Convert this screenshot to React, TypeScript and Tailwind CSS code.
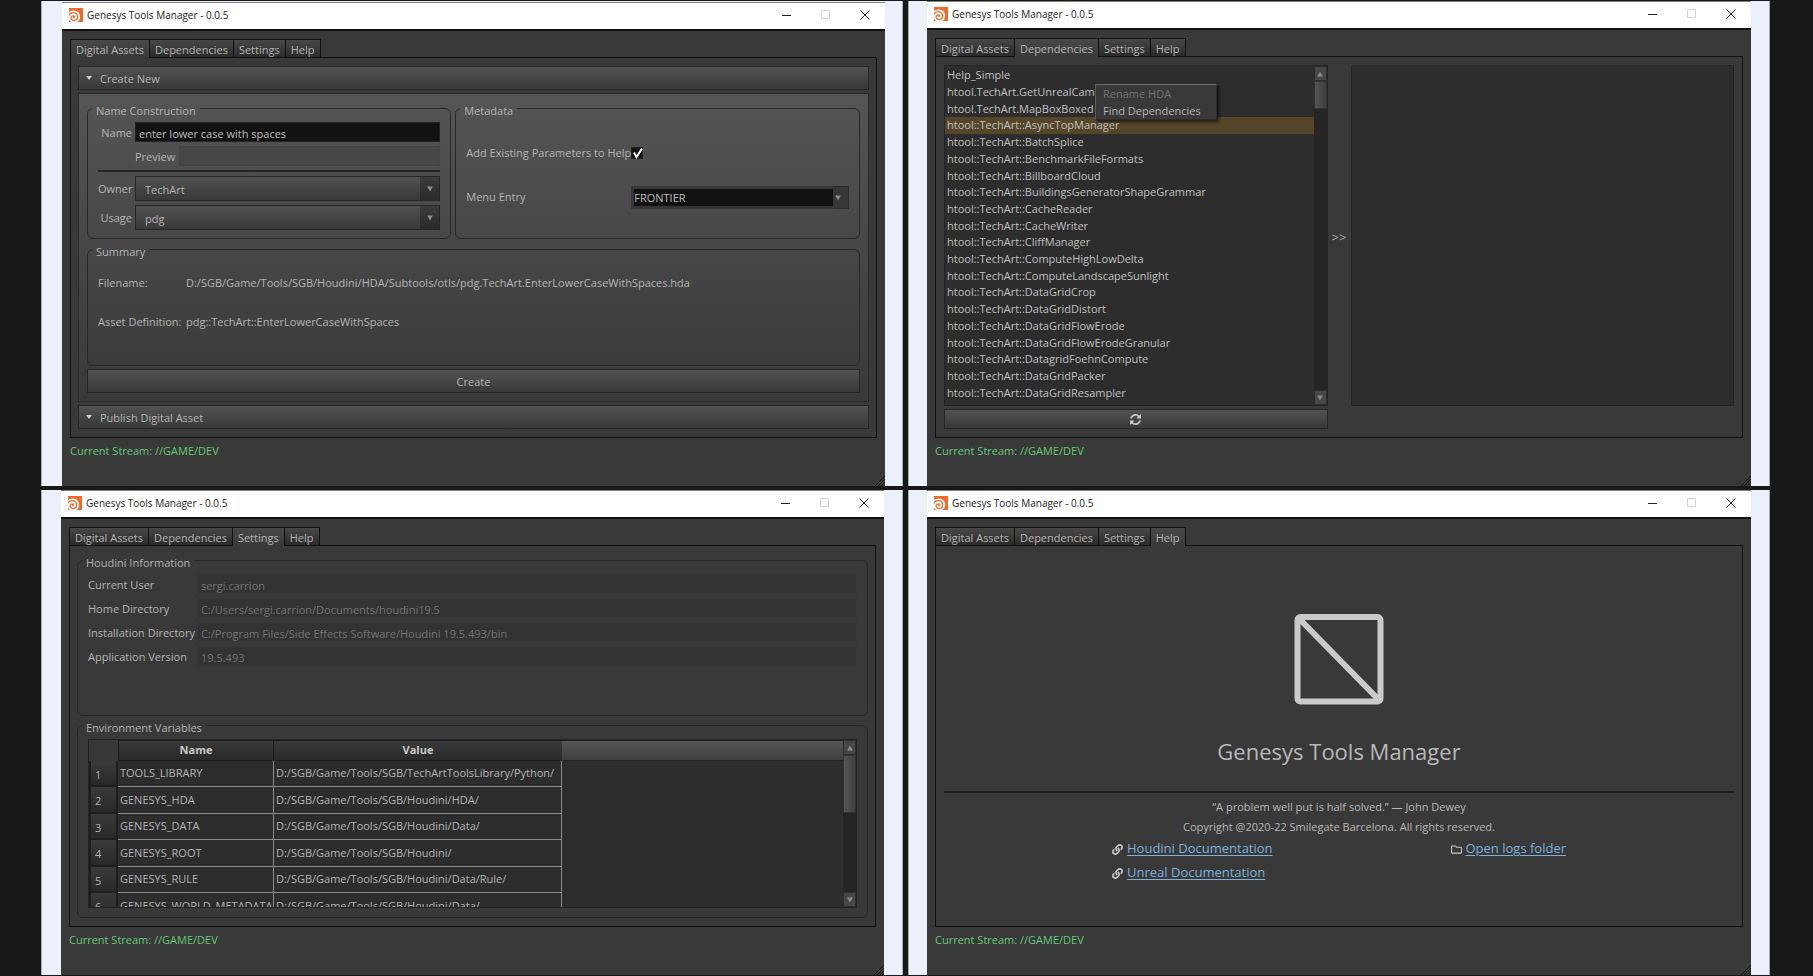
import { useId, useState, type ReactNode } from "react";
import clsx from "clsx";
import { FaLink, FaRegFolder } from "react-icons/fa";
import { SiHoudini } from "react-icons/si";

const TABS = ["Digital Assets", "Dependencies", "Settings", "Help"] as const;
type Tab = (typeof TABS)[number];

const ASSETS = [
  "Help_Simple",
  "htool.TechArt.GetUnrealCam",
  "htool.TechArt.MapBoxBoxed",
  "htool::TechArt::AsyncTopManager",
  "htool::TechArt::BatchSplice",
  "htool::TechArt::BenchmarkFileFormats",
  "htool::TechArt::BillboardCloud",
  "htool::TechArt::BuildingsGeneratorShapeGrammar",
  "htool::TechArt::CacheReader",
  "htool::TechArt::CacheWriter",
  "htool::TechArt::CliffManager",
  "htool::TechArt::ComputeHighLowDelta",
  "htool::TechArt::ComputeLandscapeSunlight",
  "htool::TechArt::DataGridCrop",
  "htool::TechArt::DataGridDistort",
  "htool::TechArt::DataGridFlowErode",
  "htool::TechArt::DataGridFlowErodeGranular",
  "htool::TechArt::DatagridFoehnCompute",
  "htool::TechArt::DataGridPacker",
  "htool::TechArt::DataGridResampler",
];

const HOUDINI_INFO = [
  ["Current User", "sergi.carrion"],
  ["Home Directory", "C:/Users/sergi.carrion/Documents/houdini19.5"],
  ["Installation Directory", "C:/Program Files/Side Effects Software/Houdini 19.5.493/bin"],
  ["Application Version", "19.5.493"],
];

const ENV_VARS = [
  ["TOOLS_LIBRARY", "D:/SGB/Game/Tools/SGB/TechArtToolsLibrary/Python/"],
  ["GENESYS_HDA", "D:/SGB/Game/Tools/SGB/Houdini/HDA/"],
  ["GENESYS_DATA", "D:/SGB/Game/Tools/SGB/Houdini/Data/"],
  ["GENESYS_ROOT", "D:/SGB/Game/Tools/SGB/Houdini/"],
  ["GENESYS_RULE", "D:/SGB/Game/Tools/SGB/Houdini/Data/Rule/"],
  ["GENESYS_WORLD_METADATA", "D:/SGB/Game/Tools/SGB/Houdini/Data/"],
];

const raised = "border border-[#262626] bg-linear-to-b from-[#525252] to-[#393939]";

function Triangle({ up = false }: { up?: boolean }) {
  return (
    <svg viewBox="0 0 6 6" className="size-1.5 fill-[#8e8e8e]" aria-hidden="true">
      <path d={up ? "M3 0.5 5.8 5.5H0.2z" : "M3 5.5 5.8 0.5H0.2z"} />
    </svg>
  );
}

function Group({ title, className, children }: { title: string; className?: string; children: ReactNode }) {
  return (
    <fieldset className={clsx("min-w-0 rounded-md border border-[#282828]", className)}>
      <legend className="ml-1 h-[18px] px-1 pt-1.5 leading-3">{title}</legend>
      {children}
    </fieldset>
  );
}

function ScrollBar({ thumb }: { thumb: string }) {
  return (
    <div className="flex w-[13px] shrink-0 flex-col bg-[#252525]">
      <button
        aria-label="Scroll up"
        className="flex h-[15px] items-center justify-center border border-[#2e2e2e] bg-[#474747]"
      >
        <Triangle up />
      </button>
      <div className={clsx("border border-[#333] bg-linear-to-r from-[#565656] to-[#3e3e3e]", thumb)} />
      <button
        aria-label="Scroll down"
        className="mt-auto flex h-[15px] items-center justify-center border border-[#2e2e2e] bg-[#474747]"
      >
        <Triangle />
      </button>
    </div>
  );
}

function Combo({ id, value }: { id: string; value: string }) {
  return (
    <div className="relative h-[25px]">
      <select id={id} className={clsx(raised, "size-full appearance-none pt-0.5 pl-[9px] leading-4 text-[#b4b4b4]")}>
        <option>{value}</option>
      </select>
      <span className="pointer-events-none absolute inset-y-px right-px flex w-[19px] items-center justify-center bg-linear-to-b from-[#3c3c3c] to-[#2a2a2a]">
        <Triangle />
      </span>
    </div>
  );
}

function SectionButton({ children }: { children: ReactNode }) {
  return (
    <button className={clsx(raised, "flex h-6 w-full shrink-0 items-center gap-[7px] pt-0.5 pl-1.5 text-left")}>
      <svg viewBox="0 0 8 8" className="size-2 fill-[#d0d0d0]" aria-hidden="true">
        <path d="M1 1h6L4 5z" />
      </svg>
      {children}
    </button>
  );
}

function DigitalAssets() {
  const id = useId();
  return (
    <div className="flex flex-1 flex-col gap-[3px] px-[7px] py-2">
      <SectionButton>Create New</SectionButton>
      <section className="flex flex-1 flex-col border border-[#2b2b2b] bg-linear-to-b from-[#555] to-[#393939] px-2 pt-[5px] pb-2">
        <div className="grid grid-cols-[9fr_10fr] gap-x-1">
          <Group title="Name Construction">
            <div className="grid grid-cols-[34px_1fr] items-center gap-x-[3px] gap-y-1 px-2.5 pt-[5px] pb-2">
              <label htmlFor={`${id}-name`} className="pt-0.5 text-right">Name</label>
              <input
                id={`${id}-name`}
                defaultValue="enter lower case with spaces"
                className="h-5 min-w-0 border border-[#222] bg-[#121212] px-[3px] pt-0.5 text-[#bdbdbd] outline-none"
              />
              <div className="col-start-2 flex items-center gap-1">
                <label htmlFor={`${id}-preview`} className="pt-0.5">Preview</label>
                <input id={`${id}-preview`} readOnly className="h-5 min-w-0 flex-1 border border-[#434343] bg-[#474747]" />
              </div>
              <hr className="col-span-2 h-0.5 border-0 bg-[#262626]" />
              <label htmlFor={`${id}-owner`} className="pt-0.5 text-right">Owner</label>
              <Combo id={`${id}-owner`} value="TechArt" />
              <label htmlFor={`${id}-usage`} className="pt-0.5 text-right">Usage</label>
              <Combo id={`${id}-usage`} value="pdg" />
            </div>
          </Group>

          <Group title="Metadata">
            <div className="grid grid-cols-[161px_1fr] items-center gap-x-1 gap-y-6 px-2.5 pt-[27px]">
              <label htmlFor={`${id}-params`} className="whitespace-nowrap">Add Existing Parameters to Help</label>
              <span className="relative size-[18px]">
                <input
                  id={`${id}-params`}
                  type="checkbox"
                  defaultChecked
                  className="peer mt-[3px] block size-3 appearance-none border border-[#222] bg-[#141414]"
                />
                <svg
                  viewBox="0 0 14 14"
                  className="pointer-events-none absolute top-0.5 left-0 hidden size-3.5 fill-none stroke-white stroke-2 peer-checked:block"
                >
                  <path d="M3 6.5 5.5 11 11 2.5" />
                </svg>
              </span>
              <label htmlFor={`${id}-menu`}>Menu Entry</label>
              <div className="relative h-[23px]">
                <select
                  id={`${id}-menu`}
                  className="size-full appearance-none border-[3px] border-[#363636] bg-[#121212] leading-4 text-[#bdbdbd]"
                >
                  <option>FRONTIER</option>
                </select>
                <span className="pointer-events-none absolute inset-y-0 right-0 flex w-4 items-center border border-l-0 border-[#2c2c2c] bg-[#373737] pl-0.5">
                  <Triangle />
                </span>
              </div>
            </div>
          </Group>
        </div>

        <Group title="Summary" className="mt-px flex-1">
          <dl className="grid grid-cols-[84px_1fr] gap-x-1 gap-y-[23px] px-2.5 pt-[17px] leading-4">
            <dt>Filename:</dt>
            <dd>D:/SGB/Game/Tools/SGB/Houdini/HDA/Subtools/otls/pdg.TechArt.EnterLowerCaseWithSpaces.hda</dd>
            <dt className="whitespace-nowrap">Asset Definition:</dt>
            <dd>pdg::TechArt::EnterLowerCaseWithSpaces</dd>
          </dl>
        </Group>
        <button className={clsx(raised, "mt-[3px] h-6 shrink-0 pt-0.5")}>Create</button>
      </section>
      <SectionButton>Publish Digital Asset</SectionButton>
    </div>
  );
}

function Dependencies() {
  const [selected, setSelected] = useState(3);
  return (
    <div className="grid flex-1 grid-cols-[1fr_23px_1fr] grid-rows-[1fr_20px] gap-y-[3px] p-2">
      <div className="relative flex border border-[#252525] bg-[#2d2d2d]">
        <ul className="flex flex-1 flex-col pt-px pb-1">
          {ASSETS.map((asset, i) => (
            <li key={asset} className="flex min-h-4 flex-1">
              <button
                onClick={() => setSelected(i)}
                className={clsx("flex flex-1 items-center pl-0.5 leading-4 text-[#c0c0c0]", i === selected && "bg-[#55462a]")}
              >
                {asset}
              </button>
            </li>
          ))}
        </ul>
        <ScrollBar thumb="h-7" />

        {/* Context menu */}
        <div
          role="menu"
          className="absolute top-[18px] left-[150px] flex w-[122px] flex-col border border-t-[#6e6e6e] border-r-[#2c2c2c] border-b-[#2c2c2c] border-l-[#5c5c5c] bg-[#393939] shadow-[2px_2px_3px_rgba(0,0,0,0.6)]"
        >
          <button role="menuitem" disabled className="h-[17px] pt-px pl-[7px] text-left text-[#747474]">
            Rename HDA
          </button>
          <button role="menuitem" className="h-[17px] pt-px pl-[7px] text-left">
            Find Dependencies
          </button>
        </div>
      </div>
      <button className="pt-1 text-[13px] text-[#a8a8a8]">&gt;&gt;</button>
      <div className="border border-[#252525] bg-[#2d2d2d]" />
      <button aria-label="Refresh" className={clsx(raised, "flex items-center justify-center")}>
        <svg viewBox="0 0 1536 1536" className="size-[11px] fill-[#c8c8c8]">
          <path d="M1511 928q0 5-1 7-64 268-268 434.5t-478 166.5q-146 0-282.5-55t-243.5-157l-129 129q-19 19-45 19t-45-19-19-45v-448q0-26 19-45t45-19h448q26 0 45 19t19 45-19 45l-137 137q71 66 161 102t187 36q134 0 250-65t186-179q11-17 53-117 8-23 30-23h192q13 0 22.5 9.5t9.5 22.5zm25-800v448q0 26-19 45t-45 19h-448q-26 0-45-19t-19-45 19-45l138-138q-148-137-349-137-134 0-250 65t-186 179q-11 17-53 117-8 23-30 23h-199q-13 0-22.5-9.5t-9.5-22.5v-7q65-268 270-434.5t480-166.5q146 0 284 55.5t245 156.5l130-129q19-19 45-19t45 19 19 45z" />
        </svg>
      </button>
    </div>
  );
}

function Settings() {
  const id = useId();
  return (
    <div className="flex flex-1 flex-col px-[7px] pt-[5px] pb-2">
      <Group title="Houdini Information" className="h-[165px] shrink-0">
        <div className="grid grid-cols-[auto_1fr] items-center gap-x-0.5 gap-y-1 px-2.5 pt-[5px]">
          {HOUDINI_INFO.map(([label, value]) => (
            <div key={label} className="contents">
              <label htmlFor={`${id}-${label}`} className="pt-0.5">{label}</label>
              <input
                id={`${id}-${label}`}
                disabled
                value={value}
                className="h-5 min-w-0 border border-[#363636] bg-[#333] px-[3px] pt-0.5 text-[#747474]"
              />
            </div>
          ))}
        </div>
      </Group>

      <Group title="Environment Variables" className="flex-1">
        <div className="px-2.5 pt-[5px] pb-2">
          <div className="flex h-[169px] overflow-hidden border border-[#232323] bg-[#2d2d2d]">
            <div className="flex-1 overflow-hidden">
              <table className="w-full table-fixed border-separate border-spacing-0 text-left">
                <thead>
                  <tr className="h-[21px] text-center text-[#c8c8c8]">
                    <td className="w-[29px] bg-[#383838]" />
                    <th className="w-[156px] border border-[#1c1c1c] bg-linear-to-b from-[#3a3a3a] to-[#292929]">Name</th>
                    <th className="w-[288px] border-y border-[#1c1c1c] bg-linear-to-b from-[#3a3a3a] to-[#292929]">Value</th>
                    <td className="border-y border-[#232323] bg-linear-to-b from-[#555] to-[#3f3f3f]" />
                  </tr>
                </thead>
                <tbody>
                  {ENV_VARS.map(([name, value], i) => (
                    <tr key={name} className="h-[26px] even:h-[27px]">
                      <th className="border-2 border-t-0 border-[#1e1e1e] bg-linear-to-b from-[#3a3a3a] to-[#292929] pt-1 pl-1 font-normal">
                        {i + 1}
                      </th>
                      <td className="border-r border-b border-[#8c8c8c] pl-0.5 whitespace-nowrap">{name}</td>
                      <td className="border-r border-b border-[#8c8c8c] pl-0.5 whitespace-nowrap">{value}</td>
                      <td />
                    </tr>
                  ))}
                </tbody>
              </table>
            </div>
            <ScrollBar thumb="h-[58px]" />
          </div>
        </div>
      </Group>
    </div>
  );
}

function HelpLink({ icon, children }: { icon: ReactNode; children: ReactNode }) {
  return (
    <span className="flex h-6 items-center gap-1 text-[#c8c8c8]">
      {icon}
      <a href="#" className="text-[13px] text-[#7fb0da] underline underline-offset-2">
        {children}
      </a>
    </span>
  );
}

function Help() {
  return (
    <div className="flex flex-1 flex-col p-2 text-center text-[#b8b8b8]">
      <div className="flex flex-1 flex-col items-center justify-end gap-7 pb-[22px]">
        <svg viewBox="0 0 90 92" className="h-[92px] w-[90px] fill-none stroke-[#cacaca] stroke-6">
          <rect x="3.500" y="4" width="83" height="84.500" rx="3" />
          <path d="M4 4.500 86 88" />
        </svg>
        <h1 className="text-[22px] leading-9">Genesys Tools Manager</h1>
      </div>
      <hr className="h-0.5 border-0 bg-[#1f1f1f]" />
      <p className="mt-1 leading-5">“A problem well put is half solved.” — John Dewey</p>
      <p className="leading-5">Copyright @2020-22 Smilegate Barcelona. All rights reserved.</p>
      <div className="mx-auto mb-[33px] flex w-full max-w-[454px] items-start justify-between">
        <div>
          <HelpLink icon={<FaLink className="size-[11px]" />}>Houdini Documentation</HelpLink>
          <HelpLink icon={<FaLink className="size-[11px]" />}>Unreal Documentation</HelpLink>
        </div>
        <HelpLink icon={<FaRegFolder className="size-[11px]" />}>Open logs folder</HelpLink>
      </div>
    </div>
  );
}

const VIEWS: Record<Tab, () => ReactNode> = {
  "Digital Assets": DigitalAssets,
  Dependencies,
  Settings,
  Help,
};

function TitleBar() {
  return (
    <header className="flex h-[27px] shrink-0 items-center border-t border-[#808080] bg-white pr-px pb-0.5 pl-[7px] text-[10px] text-[#222]">
      <SiHoudini className="mr-1 size-3.5 text-[#f26a2b]" />
      <span className="flex-1">Genesys Tools Manager - 0.0.5</span>
      <button aria-label="Minimize" className="flex h-full w-[39px] items-center justify-center">
        <svg viewBox="0 0 10 10" className="size-2.5 stroke-[#222]"><path d="M0 5.500h9" /></svg>
      </button>
      <button aria-label="Maximize" disabled className="flex h-full w-[39px] items-center justify-center">
        <svg viewBox="0 0 10 10" className="size-2.5 fill-none stroke-[#d5d5d5]"><path d="M.5.5h8v8h-8z" /></svg>
      </button>
      <button aria-label="Close" className="flex h-full w-[39px] items-center justify-center">
        <svg viewBox="0 0 10 10" className="size-2.5 stroke-[#222]"><path d="m.5.5 9 9m0-9-9 9" /></svg>
      </button>
    </header>
  );
}

function ToolWindow({ tab, frame }: { tab: Tab; frame: string }) {
  const [active, setActive] = useState<Tab>(tab);
  const View = VIEWS[active];
  return (
    <div className={clsx("flex min-w-0 border-x border-[#a9acb3] bg-[#ecf0fa]", frame)}>
      <div className="relative flex min-w-0 flex-1 flex-col bg-[#393939]">
        <TitleBar />
        <div className="flex flex-1 flex-col border-t-2 border-[#111] px-2 pt-2">
          <nav role="tablist" className="relative -mb-px flex h-[19px] self-start border-r border-[#111]">
            {TABS.map((name) => (
              <button
                key={name}
                role="tab"
                aria-selected={name === active}
                onClick={() => setActive(name)}
                className={clsx(
                  "border-t border-l border-[#111] bg-linear-to-b px-[5px] pt-0.5",
                  name === active ? "from-[#484848] to-[#393939]" : "border-b from-[#484848] to-[#2b2b2b]",
                )}
              >
                {name}
              </button>
            ))}
          </nav>
          <div className="flex flex-1 flex-col border border-[#111]">
            <View />
          </div>
          <p className="h-12 pt-[5px] leading-4 text-[#66c878]">Current Stream: //GAME/DEV</p>
        </div>
        <svg viewBox="0 0 10 10" className="absolute right-0 bottom-0 size-2.5 fill-none stroke-[#161616]">
          <path d="M0 10 10 0M3 10 10 3M6 10 10 6M9 10l1-1" />
        </svg>
      </div>
    </div>
  );
}

export default function App() {
  return (
    <main className="grid min-h-screen grid-cols-2 grid-rows-2 gap-x-[5px] gap-y-1 bg-[#181818] py-px pr-[43px] pl-[41px] font-['Open_Sans',sans-serif] text-[11px] text-[#b4b4b4]">
      <ToolWindow tab="Digital Assets" frame="pt-px pl-5 pr-[17px]" />
      <ToolWindow tab="Dependencies" frame="px-[18px]" />
      <ToolWindow tab="Settings" frame="pl-[19px] pr-[18px]" />
      <ToolWindow tab="Help" frame="px-[18px]" />
    </main>
  );
}
